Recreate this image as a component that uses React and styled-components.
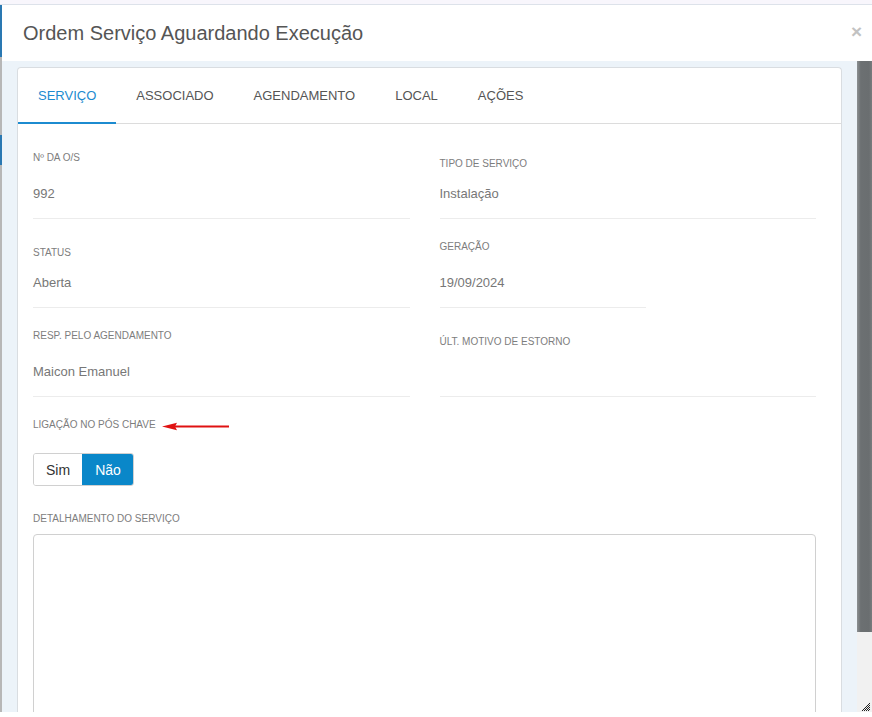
import React from 'react'
import styled, { createGlobalStyle } from 'styled-components'

const GlobalStyle = createGlobalStyle`
  html, body {
    margin: 0;
    padding: 0;
    background: #fff;
  }
  body {
    font-family: "Liberation Sans", Arial, sans-serif;
  }
  * {
    box-sizing: border-box;
  }
`

const tabs = ['Serviço', 'Associado', 'Agendamento', 'Local', 'Ações']

const fields = [
  { label: 'Nº da O/S', value: '992' },
  { label: 'Tipo de Serviço', value: 'Instalação', drop: true },
  { label: 'Status', value: 'Aberta', drop: true },
  { label: 'Geração', value: '19/09/2024', width: '206px' },
  { label: 'Resp. pelo Agendamento', value: 'Maicon Emanuel' },
  { label: 'Últ. Motivo de Estorno', value: '', drop: true },
]

function Grip() {
  const dots = []
  for (let r = 0; r < 8; r++) {
    for (let c = 0; c < 8; c++) {
      if (c >= 7 - r && (r + c) % 2 === 1) dots.push(<rect key={r + '-' + c} x={c} y={r} width="1" height="1" />)
    }
  }
  return (
    <GripSvg width="8" height="8" viewBox="0 0 8 8" fill="#222">
      {dots}
    </GripSvg>
  )
}

function App() {
  return (
    <>
      <GlobalStyle />
      <Page>
        <TopStrip />
        <Main>
          <LeftEdge />
          <Modal>
            <Header>
              <Title>Ordem Serviço Aguardando Execução</Title>
              <Close>×</Close>
            </Header>
            <Body>
              <Content>
                <Card>
                  <TabBar>
                    {tabs.map((t, i) => (
                      <Tab key={t} $active={i === 0}>{t}</Tab>
                    ))}
                  </TabBar>
                  <Form>
                    <Grid>
                      {fields.map(f => (
                        <Field key={f.label} $width={f.width}>
                          <LabelZone $drop={f.drop}>
                            <Label>{f.label}</Label>
                          </LabelZone>
                          <Value>{f.value}</Value>
                        </Field>
                      ))}
                    </Grid>

                    <ToggleSection>
                      <LabelZone $h="34px">
                        <Label>
                          Ligação no Pós Chave
                          <Arrow width="68" height="9" viewBox="0 0 68 9">
                            <line x1="12" y1="4.5" x2="67" y2="4.5" stroke="#e01212" strokeWidth="2" />
                            <polygon points="0,4.5 15,0.8 13,4.5 15,8.2" fill="#e01212" />
                          </Arrow>
                        </Label>
                      </LabelZone>
                      <Toggle>
                        <ToggleButton>Sim</ToggleButton>
                        <ToggleButton $on>Não</ToggleButton>
                      </Toggle>
                    </ToggleSection>

                    <DetailSection>
                      <Label>Detalhamento do Serviço</Label>
                      <TextArea />
                    </DetailSection>
                  </Form>
                </Card>
              </Content>
              <Scrollbar>
                <Thumb />
                <Track>
                  <Grip />
                </Track>
              </Scrollbar>
            </Body>
          </Modal>
        </Main>
      </Page>
    </>
  )
}

export default App

const Page = styled.div`
  width: 872px;
  height: 717px;
  overflow: hidden;
  display: flex;
  flex-direction: column;
  background: #fff;
`

const TopStrip = styled.div`
  height: 5px;
  flex-shrink: 0;
  background: #f8f6fc;
  border-bottom: 1px solid #dde2ea;
`

const Main = styled.div`
  display: flex;
  height: 707px;
  flex-shrink: 0;
`

const LeftEdge = styled.div`
  width: 2px;
  flex-shrink: 0;
  background: linear-gradient(
    #2a78b2 0,
    #2a78b2 52px,
    #b7b7b7 52px,
    #b7b7b7 130px,
    #2a78b2 130px,
    #2a78b2 160px,
    #b7b7b7 160px
  );
`

const Modal = styled.div`
  flex: 1;
  display: flex;
  flex-direction: column;
  background: #fff;
`

const Header = styled.div`
  height: 56px;
  flex-shrink: 0;
  display: flex;
  align-items: center;
  justify-content: space-between;
  padding: 0 10px 0 21px;
`

const Title = styled.h4`
  margin: 0;
  font-size: 20px;
  font-weight: normal;
  color: #555;
`

const Close = styled.span`
  color: #c2c2c2;
  font-size: 19px;
  font-weight: bold;
  line-height: 1;
  margin-top: -4px;
`

const Body = styled.div`
  flex: 1;
  display: flex;
  overflow: hidden;
  background: #ecf3f9;
`

const Content = styled.div`
  flex: 1;
  padding: 6px 15px 0 15px;
  overflow: hidden;
`

const Card = styled.div`
  background: #fff;
  border: 1px solid #d9dde1;
  border-bottom: none;
  border-radius: 4px 4px 0 0;
`

const TabBar = styled.div`
  display: flex;
  height: 56px;
  border-bottom: 1px solid #dcdcdc;
`

const Tab = styled.div`
  display: flex;
  align-items: center;
  padding: 0 20px;
  margin-bottom: -1px;
  font-size: 13px;
  text-transform: uppercase;
  color: ${p => (p.$active ? '#1c8bd0' : '#555')};
  border-bottom: 2px solid ${p => (p.$active ? '#1c8bd0' : 'transparent')};
  padding-top: 1px;
  cursor: pointer;
`

const Form = styled.div`
  padding: 28px 25px 0 15px;
`

const Grid = styled.div`
  display: grid;
  grid-template-columns: 1fr 1fr;
  column-gap: 30px;
  row-gap: 22px;
`

const Field = styled.div`
  width: ${p => p.$width || 'auto'};
  padding-bottom: 14px;
  border-bottom: 1px solid #ececec;
`

const LabelZone = styled.div`
  height: ${p => p.$h || '32px'};
  padding-top: ${p => (p.$drop ? '6px' : '0')};
`

const Label = styled.div`
  display: flex;
  align-items: center;
  font-size: 10px;
  line-height: 12px;
  text-transform: uppercase;
  color: #7d7d7d;
`

const Value = styled.div`
  height: 20px;
  line-height: 20px;
  font-size: 13px;
  color: #777;
`

const Arrow = styled.svg`
  margin-left: 6px;
  margin-top: 2px;
`

const ToggleSection = styled.div`
  margin-top: 22px;
`

const Toggle = styled.div`
  display: inline-flex;
  height: 33px;
  border: 1px solid #d0d0d0;
  border-radius: 3px;
  overflow: hidden;
`

const ToggleButton = styled.div`
  display: flex;
  align-items: center;
  padding: 0 12px;
  font-size: 14px;
  color: ${p => (p.$on ? '#fff' : '#333')};
  background: ${p => (p.$on ? '#0a87c9' : '#fff')};
  border-left: ${p => (p.$on ? '1px solid #0a87c9' : 'none')};
  cursor: pointer;
`

const DetailSection = styled.div`
  margin-top: 27px;
`

const TextArea = styled.div`
  margin-top: 9px;
  height: 240px;
  border: 1px solid #d0d0d0;
  border-radius: 4px;
`

const Scrollbar = styled.div`
  width: 15px;
  flex-shrink: 0;
  display: flex;
  flex-direction: column;
`

const Thumb = styled.div`
  height: 571px;
  background: linear-gradient(to right, #8c9092 0, #6c7072 25%, #6a6e70 80%, #787c7e 100%);
`

const Track = styled.div`
  flex: 1;
  background: #f1f1f1;
  display: flex;
  align-items: flex-end;
  justify-content: flex-end;
  padding: 0 2px 1px 0;
`

const GripSvg = styled.svg`
  display: block;
`
